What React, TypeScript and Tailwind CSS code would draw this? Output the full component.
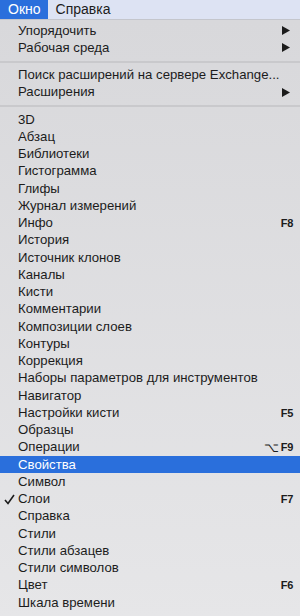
import { ReactNode } from "react";

type Item = {
  label: string;
  shortcut?: ReactNode;
  submenu?: boolean;
  checked?: boolean;
  active?: boolean;
};

const groups: Item[][] = [
  [
    { label: "Упорядочить", submenu: true },
    { label: "Рабочая среда", submenu: true },
  ],
  [
    { label: "Поиск расширений на сервере Exchange..." },
    { label: "Расширения", submenu: true },
  ],
  [
    { label: "3D" },
    { label: "Абзац" },
    { label: "Библиотеки" },
    { label: "Гистограмма" },
    { label: "Глифы" },
    { label: "Журнал измерений" },
    { label: "Инфо", shortcut: "F8" },
    { label: "История" },
    { label: "Источник клонов" },
    { label: "Каналы" },
    { label: "Кисти" },
    { label: "Комментарии" },
    { label: "Композиции слоев" },
    { label: "Контуры" },
    { label: "Коррекция" },
    { label: "Наборы параметров для инструментов" },
    { label: "Навигатор" },
    { label: "Настройки кисти", shortcut: "F5" },
    { label: "Образцы" },
    {
      label: "Операции",
      shortcut: (
        <>
          <span className="mr-[2px] text-[13px] font-normal">⌥</span>F9
        </>
      ),
    },
    { label: "Свойства", active: true },
    { label: "Символ" },
    { label: "Слои", shortcut: "F7", checked: true },
    { label: "Справка" },
    { label: "Стили" },
    { label: "Стили абзацев" },
    { label: "Стили символов" },
    { label: "Цвет", shortcut: "F6" },
    { label: "Шкала времени" },
  ],
];

function Row({ item }: { item: Item }) {
  return (
    <div
      className={
        "relative flex h-[17.25px] items-center pl-[18px] pr-[7px] " +
        (item.active ? "bg-[#2a6fdc] text-white" : "text-[#1c1c1c]")
      }
    >
      {item.checked && (
        <svg
          width="11"
          height="11"
          viewBox="0 0 11 11"
          className="absolute left-[4px] top-[3px]"
        >
          <path d="M1 6 L4 9.5 L10 1" fill="none" stroke="#1c1c1c" strokeWidth="1.6" />
        </svg>
      )}
      <span className="flex-1 truncate">{item.label}</span>
      {item.shortcut && (
        <span className="flex items-center text-[11px] font-bold tracking-tight">
          {item.shortcut}
        </span>
      )}
      {item.submenu && (
        <svg width="8" height="9" viewBox="0 0 8 9" className="mr-[3px]">
          <path d="M0 0 L8 4.5 L0 9 Z" fill="#1c1c1c" />
        </svg>
      )}
    </div>
  );
}

export default function App() {
  return (
    <div
      className="h-[616px] w-[300px] overflow-hidden text-[13.2px]"
      style={{ fontFamily: '"Liberation Sans", Arial, sans-serif' }}
    >
      <div className="flex h-[20px] border-b border-[#c4c6cc] bg-[#dde3f3] text-[14px]">
        <div className="flex items-center bg-[#2a6fdc] pl-[8px] pr-[7px] text-white">Окно</div>
        <div className="flex items-center px-[8px] text-[#1c1c1c]">Справка</div>
      </div>
      <div className="h-[596px] bg-gradient-to-b from-[#d8d8db] to-[#e6e6e8] pt-[2px]">
        {groups.map((g, i) => (
          <div key={i}>
            {i > 0 && <div className="my-[4px] h-[2px] bg-[#c9c9cc]" />}
            {g.map((item) => (
              <Row key={item.label} item={item} />
            ))}
          </div>
        ))}
      </div>
    </div>
  );
}
